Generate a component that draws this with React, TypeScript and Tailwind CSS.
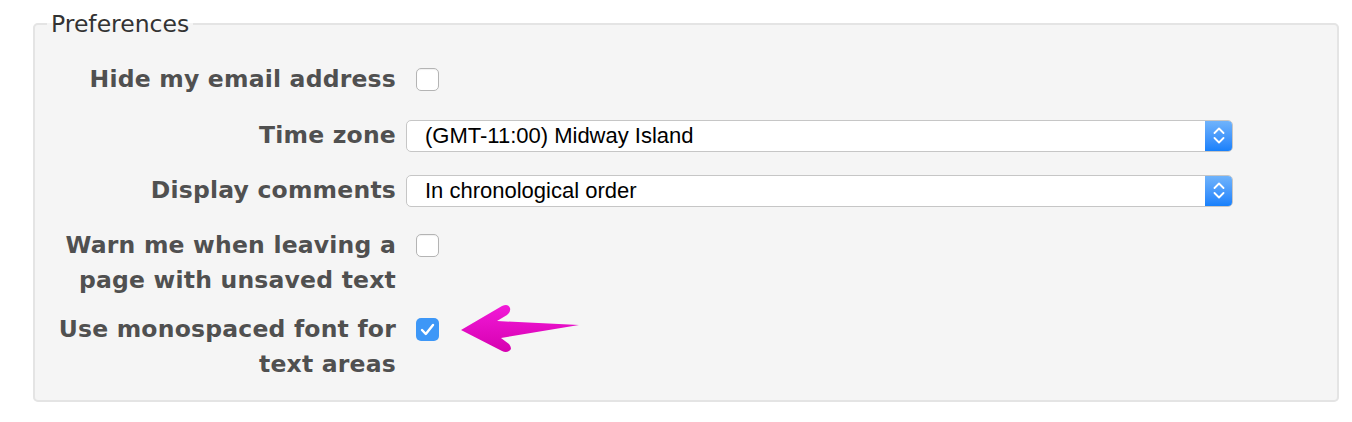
import { ReactNode } from 'react';

const labelFont = { fontFamily: '"DejaVu Sans", Verdana, sans-serif' };

function Checkbox({ checked }: { checked?: boolean }) {
  if (checked) {
    return (
      <span className="ml-[10px] mt-[6px] flex h-[23px] w-[23px] items-center justify-center rounded-[5px] bg-[#3d97f7]">
        <svg width="15" height="13" viewBox="0 0 15 13" fill="none">
          <path d="M2 7 L5.8 11 L13 2" stroke="white" strokeWidth="2.4" strokeLinecap="round" strokeLinejoin="round" />
        </svg>
      </span>
    );
  }
  return (
    <span className="ml-[10px] mt-[6px] block h-[23px] w-[23px] rounded-[5px] border border-[#b4b4b4] bg-white shadow-[inset_0_1px_1px_rgba(0,0,0,0.06)]" />
  );
}

function Select({ value }: { value: string }) {
  return (
    <div className="flex h-[32px] w-[827px] overflow-hidden rounded-[5px] border border-[#c6c6c6] bg-white">
      <div
        className="flex flex-1 items-center pl-[18px] text-[22px] text-black"
        style={{ fontFamily: '"Liberation Sans", Arial, sans-serif' }}
      >
        {value}
      </div>
      <div className="flex w-[27px] flex-col items-center justify-center gap-[3px] bg-gradient-to-b from-[#6fb3fb] to-[#1680fb]">
        <svg width="12" height="7" viewBox="0 0 12 7" fill="none">
          <path d="M1.5 6 L6 1.5 L10.5 6" stroke="white" strokeWidth="1.8" strokeLinecap="round" strokeLinejoin="round" />
        </svg>
        <svg width="12" height="7" viewBox="0 0 12 7" fill="none">
          <path d="M1.5 1 L6 5.5 L10.5 1" stroke="white" strokeWidth="1.8" strokeLinecap="round" strokeLinejoin="round" />
        </svg>
      </div>
    </div>
  );
}

function Row({ label, children, className = '', center }: { label: ReactNode; children: ReactNode; className?: string; center?: boolean }) {
  return (
    <div className={`flex ${center ? 'items-center' : 'items-start'} ${className}`}>
      <div
        className="w-[362px] shrink-0 whitespace-nowrap pr-[1px] text-right text-[23.5px] font-bold leading-[35px] tracking-[0.2px] text-[#505050]"
        style={labelFont}
      >
        {label}
      </div>
      <div className="ml-[9px] flex">{children}</div>
    </div>
  );
}

export default function App() {
  return (
    <div className="h-[422px] w-[1352px] bg-white pt-[11px]">
      <fieldset className="ml-[33px] w-[1306px] rounded-[5px] border-2 border-[#e4e4e4] bg-[#f5f5f5] pb-[18px]">
        <legend
          className="ml-[12px] px-[4px] text-[23.5px] leading-[26px] text-[#333]"
          style={labelFont}
        >
          Preferences
        </legend>
        <Row label="Hide my email address" className="mt-[25px]">
          <Checkbox />
        </Row>
        <Row label="Time zone" center className="mt-[21px]">
          <Select value="(GMT-11:00) Midway Island" />
        </Row>
        <Row label="Display comments" center className="mt-[20px]">
          <Select value="In chronological order" />
        </Row>
        <Row label={<>Warn me when leaving a<br />page with unsaved text</>} className="mt-[20px]">
          <Checkbox />
        </Row>
        <Row label={<>Use monospaced font for<br />text areas</>} className="mt-[14px]">
          <div className="flex items-start">
            <Checkbox checked />
            <svg className="ml-[20px] mt-[-10px]" width="124" height="52" viewBox="0 0 124 52">
              <defs>
                <linearGradient id="pk" x1="0" y1="0" x2="0" y2="1">
                  <stop offset="0" stopColor="#f21ad8" />
                  <stop offset="1" stopColor="#d600b0" />
                </linearGradient>
              </defs>
              <path
                d="M2 28 L43 4 Q49 1 51 6 Q52 10 48 13 L38 19 L120 23 L42 36 L50 42 Q54 47 50 49 Q47 51 43 49 Z"
                fill="url(#pk)"
              />
            </svg>
          </div>
        </Row>
      </fieldset>
    </div>
  );
}
